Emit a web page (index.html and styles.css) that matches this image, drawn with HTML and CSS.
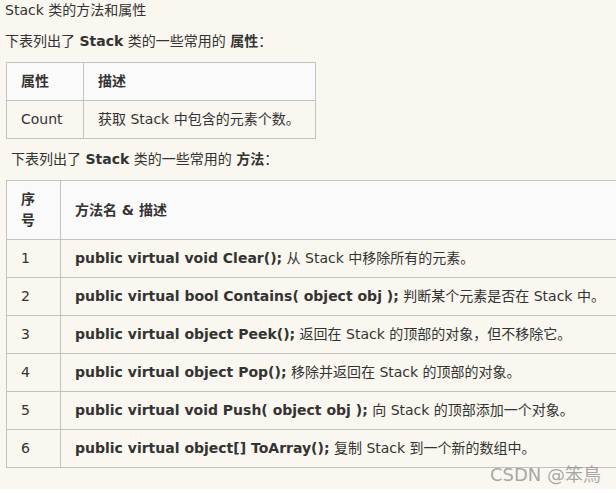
FILE: index.html
```html
<!DOCTYPE html>
<html lang="zh-CN">
<head>
<meta charset="utf-8">
<title>Stack 类的方法和属性</title>
<link rel="stylesheet" href="styles.css">
</head>
<body>
<div class="page">
  <p class="line">Stack 类的方法和属性</p>
  <p class="line">下表列出了 <strong>Stack</strong> 类的一些常用的 <strong>属性</strong>：</p>
  <table class="tbl props">
    <thead>
      <tr><th class="c1">属性</th><th>描述</th></tr>
    </thead>
    <tbody>
      <tr><td class="c1">Count</td><td>获取 Stack 中包含的元素个数。</td></tr>
    </tbody>
  </table>
  <p class="line indent">下表列出了 <strong>Stack</strong> 类的一些常用的 <strong>方法</strong>：</p>
  <table class="tbl methods">
    <thead>
      <tr><th class="n">序号</th><th>方法名 &amp; 描述</th></tr>
    </thead>
    <tbody>
      <tr><td class="n">1</td><td><strong>public virtual void Clear();</strong> 从 Stack 中移除所有的元素。</td></tr>
      <tr><td class="n">2</td><td><strong>public virtual bool Contains( object obj );</strong> 判断某个元素是否在 Stack 中。</td></tr>
      <tr><td class="n">3</td><td><strong>public virtual object Peek();</strong> 返回在 Stack 的顶部的对象，但不移除它。</td></tr>
      <tr><td class="n">4</td><td><strong>public virtual object Pop();</strong> 移除并返回在 Stack 的顶部的对象。</td></tr>
      <tr><td class="n">5</td><td><strong>public virtual void Push( object obj );</strong> 向 Stack 的顶部添加一个对象。</td></tr>
      <tr><td class="n">6</td><td><strong>public virtual object[] ToArray();</strong> 复制 Stack 到一个新的数组中。</td></tr>
    </tbody>
  </table>
  <div class="watermark">CSDN @笨鳥</div>
</div>
</body>
</html>
```

FILE: styles.css
```css
html, body {
  margin: 0;
  padding: 0;
  background: #ffffff;
  overflow: hidden;
}
.page {
  position: relative;
  box-sizing: border-box;
  height: 489px;
  width: 616px;
  background: #f9f7ef;
  padding-left: 5px;
  display: flex;
  flex-direction: column;
  gap: 10px;
  font-family: "DejaVu Sans", "Noto Sans CJK SC", sans-serif;
  font-size: 14px;
  line-height: 21px;
  color: #333333;
  overflow: hidden;
}
.line {
  margin: 0;
  white-space: nowrap;
}
.indent {
  padding-left: 6px;
}
.tbl {
  border-collapse: collapse;
  margin-left: 1px;
  flex: none;
}
.tbl th,
.tbl td {
  border: 1px solid #c2c2c2;
  padding: 8px 14px;
  text-align: left;
  vertical-align: middle;
  white-space: nowrap;
}
.tbl th {
  background: #fafafa;
  font-weight: bold;
}
.tbl td strong,
.tbl th {
  color: #333333;
}
.props {
  width: 310px;
}
.props .c1 {
  width: 48px;
}
.methods {
  width: 640px;
  table-layout: fixed;
}
.methods .n {
  width: 53px;
  box-sizing: border-box;
  white-space: normal;
}
.methods th.n {
  width: 54px;
}
.watermark {
  position: absolute;
  left: 490px;
  top: 464px;
  font-size: 18px;
  line-height: 22px;
  color: rgba(140, 140, 140, 0.75);
  white-space: nowrap;
}
```
